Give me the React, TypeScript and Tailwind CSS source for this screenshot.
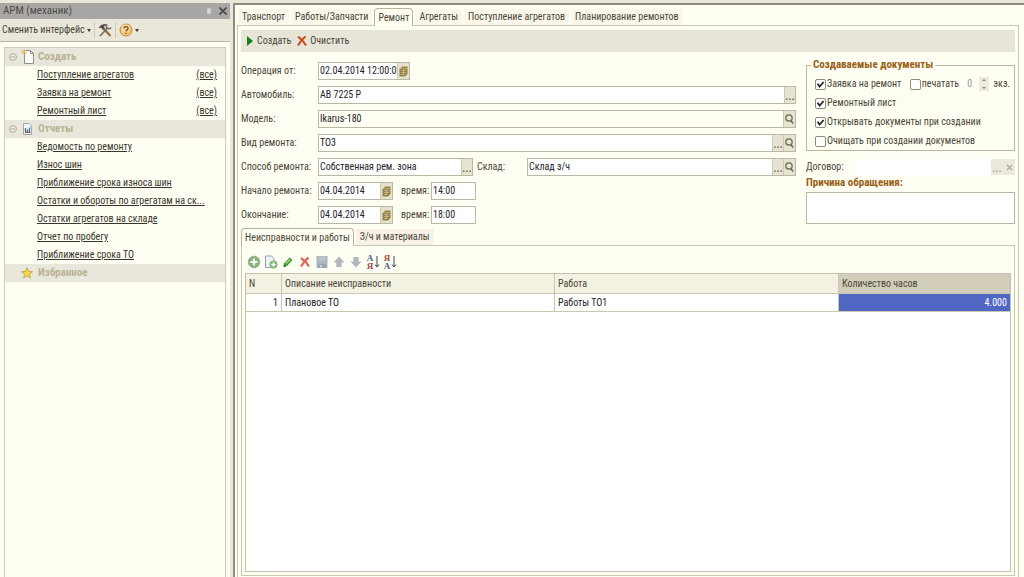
import type { ReactNode } from "react";
import { clsx } from "clsx";

const CREATE_LINKS = ["Поступление агрегатов", "Заявка на ремонт", "Ремонтный лист"];

const REPORT_LINKS = [
  "Ведомость по ремонту",
  "Износ шин",
  "Приближение срока износа шин",
  "Остатки и обороты по агрегатам на ск...",
  "Остатки агрегатов на складе",
  "Отчет по пробегу",
  "Приближение срока ТО",
];

const MAIN_TABS = [
  "Транспорт",
  "Работы/Запчасти",
  "Ремонт",
  "Агрегаты",
  "Поступление агрегатов",
  "Планирование ремонтов",
];

export default function App() {
  return (
    <div className="flex h-screen overflow-hidden bg-[#e9e6da] pt-[3px] font-['Roboto_Condensed','Liberation_Sans',sans-serif] text-[10px] leading-[14px] text-[#4a4638]">
      <Sidebar />
      <main className="ml-[3px] flex min-w-0 flex-1 flex-col border-t-2 border-l-2 border-[#8f8c86] bg-[#fffef2] pt-[3px] pr-[5px] pl-[2px]">
        <MainTabs />
        <div className="flex min-h-0 flex-1 flex-col border-x border-t border-[#c9c7ae] px-[3px] pt-1 pb-px">
          <div className="flex h-[22px] shrink-0 items-center gap-1.5 bg-[#e7e5d8] px-1.5">
            <button type="button" className="flex items-center gap-1">
              <svg viewBox="0 0 6 10" className="h-2.5 w-1.5" fill="#15801f">
                <path d="M0 0 6 5 0 10Z" />
              </svg>
              Создать
            </button>
            <button type="button" className="flex items-center gap-[3px]">
              <svg viewBox="0 0 10 10" className="size-2.5" fill="none" stroke="#cf4520" strokeWidth="2">
                <path d="M1 0.5C4 3 7 6 9 9.5M8.5 0.5C5 3 3 6 1 9.5" />
              </svg>
              Очистить
            </button>
          </div>
          <div className="mt-2.5 flex shrink-0 gap-2.5">
            <RepairForm />
            <DocumentOptions />
          </div>
          <WorksPanel />
        </div>
      </main>
    </div>
  );
}

function Sidebar() {
  return (
    <aside className="flex w-[230px] shrink-0 flex-col">
      <header className="flex h-4 shrink-0 items-center bg-[#a9a7a5] pr-[3px] pl-[3px] text-[#4d4b4a]">
        <h1 className="flex-1 text-[11px]">АРМ (механик)</h1>
        <span className="mr-2 h-1.5 w-1 rounded-full bg-[#d6d5d2]" />
        <button type="button" aria-label="Закрыть">
          <svg viewBox="0 0 8 8" className="size-2" stroke="#4a4846" strokeWidth="1.6">
            <path d="M.5.5 7.5 7.5M7.5.5.5 7.5" />
          </svg>
        </button>
      </header>
      <div className="flex h-[23px] shrink-0 items-center border-b border-[#b5b3a4] pl-0.5">
        <button type="button" className="flex items-center gap-0.5">
          Сменить интерфейс
          <Caret />
        </button>
        <span className="mx-[3px] h-4 w-px bg-[#cfccbd]" />
        <button type="button" aria-label="Настройка">
          <ToolsIcon />
        </button>
        <span className="mx-[3px] h-4 w-px bg-[#cfccbd]" />
        <button type="button" aria-label="Справка" className="flex items-center gap-0.5">
          <HelpIcon />
          <Caret />
        </button>
      </div>
      <div className="flex-1 bg-[#fffef2] pt-[5px] pr-1 pl-1">
        <nav className="h-full border border-b-0 border-[#cfccb8]">
          <SectionTitle icon={<NewPageIcon />} collapsible>
            Создать
          </SectionTitle>
          <ul>
            {CREATE_LINKS.map((label) => (
              <li key={label} className="flex h-[18px] items-center justify-between pr-2 pl-8">
                <NavLink>{label}</NavLink>
                <NavLink>(все)</NavLink>
              </li>
            ))}
          </ul>
          <SectionTitle icon={<ReportIcon />} collapsible>
            Отчеты
          </SectionTitle>
          <ul>
            {REPORT_LINKS.map((label) => (
              <li key={label} className="flex h-[18px] items-center pl-8">
                <NavLink>{label}</NavLink>
              </li>
            ))}
          </ul>
          <SectionTitle icon={<StarIcon />}>Избранное</SectionTitle>
        </nav>
      </div>
    </aside>
  );
}

function SectionTitle({
  icon,
  collapsible = false,
  children,
}: {
  icon: ReactNode;
  collapsible?: boolean;
  children: ReactNode;
}) {
  return (
    <h2 className="flex h-[18px] items-center bg-[#e9e6dc] pl-1 text-[11px] font-bold text-[#b9b391]">
      <span className="w-3">
        {collapsible && (
          <svg viewBox="0 0 8 8" className="size-2" fill="none" stroke="#b5b199">
            <circle cx="4" cy="4" r="3.5" />
            <path d="M2 4H6" />
          </svg>
        )}
      </span>
      <span className="mr-1 w-[13px]">{icon}</span>
      {children}
    </h2>
  );
}

function NavLink({ children }: { children: ReactNode }) {
  return (
    <a href="#" className="whitespace-nowrap text-[#38362e] underline underline-offset-1">
      {children}
    </a>
  );
}

function MainTabs() {
  return (
    <div role="tablist" className="-mb-px flex h-[18px] shrink-0 items-end gap-0.5 pl-px">
      {MAIN_TABS.map((tab) => {
        const active = tab === "Ремонт";
        return (
          <button
            key={tab}
            type="button"
            role="tab"
            aria-selected={active}
            className={clsx(
              "whitespace-nowrap",
              active
                ? "relative h-[18px] rounded-t-sm border border-b-0 border-[#b9b69c] bg-[#fffef2] px-[3px]"
                : "mb-px h-4 bg-[#faf6ea] px-1",
            )}
          >
            {tab}
          </button>
        );
      })}
    </div>
  );
}

function RepairForm() {
  return (
    <div className="flex min-w-0 flex-1 flex-col gap-1.5">
      <FormRow id="operation" label="Операция от:">
        <Field id="operation" value="02.04.2014 12:00:00" className="w-[92px]">
          <CalendarButton />
        </Field>
      </FormRow>
      <FormRow id="vehicle" label="Автомобиль:">
        <Field id="vehicle" value="АВ 7225 Р" className="flex-1">
          <PickButton />
        </Field>
      </FormRow>
      <FormRow id="model" label="Модель:">
        <Field id="model" value="Ikarus-180" className="flex-1" muted>
          <SearchButton />
        </Field>
      </FormRow>
      <FormRow id="kind" label="Вид ремонта:">
        <Field id="kind" value="ТО3" className="flex-1">
          <PickButton />
          <SearchButton />
        </Field>
      </FormRow>
      <FormRow id="method" label="Способ ремонта:">
        <Field id="method" value="Собственная рем. зона" className="w-[155px]">
          <PickButton />
        </Field>
        <label htmlFor="store" className="w-[54px] pl-1">
          Склад:
        </label>
        <Field id="store" value="Склад з/ч" className="flex-1">
          <PickButton />
          <SearchButton />
        </Field>
      </FormRow>
      <FormRow id="start-date" label="Начало ремонта:">
        <DateTime id="start" date="04.04.2014" time="14:00" />
      </FormRow>
      <FormRow id="end-date" label="Окончание:">
        <DateTime id="end" date="04.04.2014" time="18:00" />
      </FormRow>
    </div>
  );
}

function FormRow({ id, label, children }: { id: string; label: string; children: ReactNode }) {
  return (
    <div className="flex h-[18px] items-center">
      <label htmlFor={id} className="w-[77px] shrink-0 whitespace-nowrap">
        {label}
      </label>
      {children}
    </div>
  );
}

function Field({
  id,
  value,
  className,
  muted = false,
  children,
}: {
  id: string;
  value: string;
  className?: string;
  muted?: boolean;
  children?: ReactNode;
}) {
  return (
    <div
      className={clsx(
        "flex h-[18px] min-w-0 border border-[#bab8a4]",
        muted ? "bg-[#fffef2]" : "bg-white",
        className,
      )}
    >
      <input
        id={id}
        defaultValue={value}
        className="min-w-0 flex-1 bg-transparent pl-px text-[#26252c] outline-none"
      />
      {children}
    </div>
  );
}

function DateTime({ id, date, time }: { id: string; date: string; time: string }) {
  return (
    <>
      <Field id={`${id}-date`} value={date} className="w-[75px]">
        <CalendarButton />
      </Field>
      <label htmlFor={`${id}-time`} className="w-[38px] pl-2">
        время:
      </label>
      <Field id={`${id}-time`} value={time} className="w-[45px]" />
    </>
  );
}

function CalendarButton() {
  return (
    <button
      type="button"
      aria-label="Календарь"
      className="flex w-3 shrink-0 items-center justify-center border-l border-[#cdc9b0] bg-[#e6e2cf]"
    >
      <svg viewBox="0 0 9 11" className="h-[11px] w-[9px]">
        <path d="M2.5.5H8.5V8L6 10.5H.5V2.5H2.5Z" fill="#94824a" />
        <path d="M2 4.5H7M2 6.5H7M2 8.5H5.5M3.5 2.5H8M4.5 3.5V9" stroke="#d8c98f" strokeWidth=".6" />
      </svg>
    </button>
  );
}

function PickButton() {
  return (
    <button
      type="button"
      aria-label="Выбрать"
      className="flex w-[11px] shrink-0 items-end justify-center border-l border-[#cdc9b0] bg-[#e6e3d3] pb-[3px]"
    >
      <svg viewBox="0 0 8 2" className="h-0.5 w-2" fill="#6b6757">
        <path d="M0 .5H1.5V2H0ZM3.2.5H4.7V2H3.2ZM6.4.5H7.9V2H6.4Z" />
      </svg>
    </button>
  );
}

function SearchButton() {
  return (
    <button
      type="button"
      aria-label="Открыть"
      className="flex w-3 shrink-0 items-center justify-center border-l border-[#cdc9b0] bg-[#e6e3d3]"
    >
      <svg viewBox="0 0 9 10" className="h-2.5 w-[9px]" fill="none" stroke="#6b654d">
        <circle cx="4" cy="4" r="3.2" strokeWidth="1.2" />
        <path d="M5.8 6.4 8.2 9.4" strokeWidth="1.6" />
      </svg>
    </button>
  );
}

function DocumentOptions() {
  return (
    <div className="flex w-[209px] shrink-0 flex-col">
      <fieldset className="-mt-1 h-[93px] min-w-0 border border-[#bab8a4] pr-1 pl-2">
        <legend className="-ml-1 px-0.5 text-[11px] font-bold text-[#9a5f16]">
          Создаваемые документы
        </legend>
        <div className="flex flex-col gap-[5px] pt-[5px]">
          <div className="flex items-center justify-between">
            <CheckBox label="Заявка на ремонт" checked />
            <CheckBox label="печатать" />
            <label className="flex items-center gap-1">
              <input
                defaultValue="0"
                aria-label="Количество экземпляров"
                className="h-3.5 w-2 text-[#9c998c] outline-none"
              />
              <span className="flex h-3.5 w-2.5 items-center justify-center bg-[#efecdf]">
                <svg viewBox="0 0 6 12" className="h-3 w-1.5" fill="#8d806a">
                  <path d="M1 3 3 1 5 3ZM1 9 3 11 5 9Z" />
                </svg>
              </span>
              экз.
            </label>
          </div>
          <CheckBox label="Ремонтный лист" checked />
          <CheckBox label="Открывать документы при создании" checked />
          <CheckBox label="Очищать при создании документов" />
        </div>
      </fieldset>
      <div className="mt-[7px] flex h-[18px] items-center">
        <label htmlFor="contract" className="w-11">
          Договор:
        </label>
        <input id="contract" className="h-[17px] min-w-0 flex-1 bg-white outline-none" />
        <button
          type="button"
          aria-label="Выбрать договор"
          className="flex h-4 w-3 items-end justify-center bg-[#ebe8dc] pb-[3px]"
        >
          <svg viewBox="0 0 8 2" className="h-0.5 w-2" fill="#a9a698">
            <path d="M0 .5H1.5V2H0ZM3.2.5H4.7V2H3.2ZM6.4.5H7.9V2H6.4Z" />
          </svg>
        </button>
        <button
          type="button"
          aria-label="Очистить договор"
          className="flex h-4 w-3 items-center justify-center bg-[#ebe8dc]"
        >
          <svg viewBox="0 0 8 8" className="size-[7px]" stroke="#a9a698" strokeWidth="1.4">
            <path d="M1 1 7 7M7 1 1 7" />
          </svg>
        </button>
      </div>
      <label htmlFor="reason" className="text-[11px] font-bold text-[#9a5f16]">
        Причина обращения:
      </label>
      <textarea
        id="reason"
        className="mt-0.5 h-8 resize-none border border-[#bab8a4] bg-white outline-none"
      />
    </div>
  );
}

function CheckBox({ label, checked = false }: { label: string; checked?: boolean }) {
  return (
    <label className="flex h-3.5 items-center gap-px whitespace-nowrap">
      <span className="relative size-[11px]">
        <input
          type="checkbox"
          defaultChecked={checked}
          className="peer block size-[11px] appearance-none rounded-xs border border-[#8f8c7c] bg-white"
        />
        <svg
          viewBox="0 0 11 11"
          className="pointer-events-none absolute inset-0 hidden size-[11px] peer-checked:block"
          fill="none"
          stroke="#26252c"
          strokeWidth="1.8"
        >
          <path d="M2.5 4.8 4.6 7.6 8.6 3" />
        </svg>
      </span>
      {label}
    </label>
  );
}

function WorksPanel() {
  return (
    <section className="mt-1 flex min-h-0 flex-1 flex-col">
      <div role="tablist" className="-mb-px flex h-[18px] shrink-0 items-end gap-0.5">
        <button
          type="button"
          role="tab"
          aria-selected
          className="relative h-[18px] whitespace-nowrap rounded-t-sm border border-b-0 border-[#b9b69c] bg-[#fffef2] px-[3px]"
        >
          Неисправности и работы
        </button>
        <button
          type="button"
          role="tab"
          aria-selected={false}
          className="mb-px h-4 whitespace-nowrap bg-[#f8f1e6] px-1"
        >
          З/ч и материалы
        </button>
      </div>
      <div className="flex min-h-0 flex-1 flex-col border border-[#c9c7ae] px-[3px] pb-[3px]">
        <div className="flex h-[27px] shrink-0 items-center gap-[3px] pt-1 pl-0.5">
          <TableToolbar />
        </div>
        <div className="min-h-0 flex-1 border border-[#c3c1ae] bg-white">
          <WorksTable />
        </div>
      </div>
    </section>
  );
}

function WorksTable() {
  return (
    <table className="w-full table-fixed border-separate border-spacing-0 text-left">
      <colgroup>
        <col className="w-9" />
        <col className="w-[273px]" />
        <col className="w-[284px]" />
        <col />
      </colgroup>
      <thead>
        <tr className="h-5 bg-[#f3f1e1]">
          <th className="border-r border-b border-[#c9c7b0] px-[3px] font-normal">N</th>
          <th className="border-r border-b border-[#c9c7b0] px-[3px] font-normal">
            Описание неисправности
          </th>
          <th className="border-r border-b border-[#c9c7b0] px-[3px] font-normal">Работа</th>
          <th className="border-b border-[#c9c7b0] bg-[#d1cdb9] px-[3px] font-normal">
            Количество часов
          </th>
        </tr>
      </thead>
      <tbody>
        <tr className="h-[18px] text-[#26252c]">
          <td className="border-r border-b border-[#c9c7b0] px-[3px] text-right">1</td>
          <td className="border-r border-b border-[#c9c7b0] px-[3px]">Плановое ТО</td>
          <td className="border-r border-b border-[#c9c7b0] px-[3px]">Работы ТО1</td>
          <td className="border-b border-[#c9c7b0] bg-[#5068c4] px-[3px] text-right text-white">
            4.000
          </td>
        </tr>
      </tbody>
    </table>
  );
}

function TableToolbar() {
  return (
    <>
      <IconButton label="Добавить">
        <circle cx="7" cy="7" r="5.8" fill="#7fb877" stroke="#a3aaa0" />
        <path d="M7 3.5V10.5M3.5 7H10.5" stroke="#fff" strokeWidth="2" />
      </IconButton>
      <IconButton label="Скопировать">
        <path d="M1.5 1H7.5L10 3.5V12.5H1.5Z" fill="#eef4f8" stroke="#8fa3b0" />
        <circle cx="9.5" cy="9.5" r="3.8" fill="#7fb877" stroke="#8fae88" strokeWidth=".6" />
        <path d="M9.5 7.3V11.7M7.3 9.5H11.7" stroke="#fff" strokeWidth="1.3" />
      </IconButton>
      <IconButton label="Изменить">
        <path d="M3 8.5 8.5 2.5 11.5 5 6 11 2.5 12Z" fill="#3f9e2e" />
        <path d="M5 8.5 9 4.5" stroke="#a5dc8f" strokeWidth="1.2" />
        <path d="M2.5 12 3 9.5 5 11.2Z" fill="#2d5d24" />
      </IconButton>
      <IconButton label="Удалить">
        <path d="M3 3C6 5 9 8 11 11.5M10.5 2.5C7 5 5 8 3 11.5" stroke="#df6a5c" strokeWidth="2.4" />
      </IconButton>
      <IconButton label="Записать">
        <path d="M1.5 1H12.5V13H1.5Z" fill="#a9b5bf" />
        <path d="M3.5 1.5H10.5V6H3.5Z" fill="#b9c5cd" />
        <path d="M3.5 9H10.5V13H3.5Z" fill="#97a5b0" />
        <path d="M5 10H7V12.5H5Z" fill="#c9d2d8" />
      </IconButton>
      <IconButton label="Вверх">
        <path d="M7 1.5 12.5 7.5H9.7V12H4.3V7.5H1.5Z" fill="#b1b6ba" />
      </IconButton>
      <IconButton label="Вниз">
        <path d="M7 12.5 12.5 6.5H9.7V2H4.3V6.5H1.5Z" fill="#b1b6ba" />
      </IconButton>
      <SortButton top="А" bottom="Я" label="По возрастанию" />
      <SortButton top="Я" bottom="А" label="По убыванию" />
    </>
  );
}

function IconButton({ label, children }: { label: string; children: ReactNode }) {
  return (
    <button type="button" aria-label={label}>
      <svg viewBox="0 0 14 14" className="size-3.5" fill="none">
        {children}
      </svg>
    </button>
  );
}

function SortButton({ top, bottom, label }: { top: string; bottom: string; label: string }) {
  return (
    <button type="button" aria-label={label} className="flex items-center">
      <span className="flex w-2 flex-col text-center font-['Liberation_Serif',serif] text-[9px] leading-[8px] font-bold">
        <span className={top === "А" ? "text-[#47607c]" : "text-[#a3453f]"}>{top}</span>
        <span className={bottom === "А" ? "text-[#47607c]" : "text-[#a3453f]"}>{bottom}</span>
      </span>
      <svg viewBox="0 0 6 14" className="h-3.5 w-1.5" fill="none" stroke="#3d4450">
        <path d="M3 1V12M1 9.5 3 12 5 9.5" />
      </svg>
    </button>
  );
}

function Caret() {
  return (
    <svg viewBox="0 0 4 3" className="h-[3px] w-1" fill="#3f3d36">
      <path d="M0 0H4L2 3Z" />
    </svg>
  );
}

function ToolsIcon() {
  return (
    <svg viewBox="0 0 14 14" className="size-3.5" fill="none">
      <path d="M2 13 9.5 5" stroke="#77716c" strokeWidth="1.8" />
      <path d="M9 1.2A3 3 0 0 0 9.3 5.2 3 3 0 0 0 13.2 4.6" stroke="#77716c" strokeWidth="1.6" />
      <path d="M5.5 5.5 12.5 13" stroke="#8a6a3c" strokeWidth="2" />
      <path d="M.5 4.8 3 2 7.5 .8 8 2.4 5.8 3.2 6.8 5.2 4.6 7 3.5 5Z" fill="#55504d" />
    </svg>
  );
}

function HelpIcon() {
  return (
    <svg viewBox="0 0 14 14" className="size-3.5" fill="none">
      <circle cx="7" cy="7" r="6" fill="#f3c66e" stroke="#b98c4a" />
      <circle cx="6.5" cy="5.5" r="4" fill="#f9dda0" />
      <path d="M5 5.5C5 3 9 3 9 5.3 9 7 7 6.8 7 8.5M7 9.8V11" stroke="#7a4d22" strokeWidth="1.4" />
    </svg>
  );
}

function NewPageIcon() {
  return (
    <svg viewBox="0 0 13 16" className="h-4 w-[13px]" fill="none">
      <path d="M3.5 1.5H9.5L12.5 4.5V14.5H3.5Z" fill="#fffefa" stroke="#8f8d88" />
      <path d="M9.5 1.5V4.5H12.5" stroke="#8f8d88" />
      <path d="M3 0V6M0 3H6M1 1 5 5M5 1 1 5" stroke="#e0bd72" strokeWidth=".9" />
    </svg>
  );
}

function ReportIcon() {
  return (
    <svg viewBox="0 0 13 16" className="h-4 w-[13px]" fill="none">
      <path d="M2.5 2.5H8L10.5 5V13.5H2.5Z" fill="#f2f7f8" stroke="#9aabb0" />
      <path d="M4.5 11V7M6.5 11V8.5M8.5 11V6.5" stroke="#4d6a86" strokeWidth="1.3" />
      <path d="M4 11.5H9.5" stroke="#a5604e" />
    </svg>
  );
}

function StarIcon() {
  return (
    <svg viewBox="0 0 12 12" className="size-3">
      <path
        d="M6 .8 7.5 4.4 11.4 4.7 8.4 7.2 9.4 11 6 8.9 2.6 11 3.6 7.2.6 4.7 4.5 4.4Z"
        fill="#f8d84c"
        stroke="#c39a2e"
        strokeWidth=".8"
      />
    </svg>
  );
}
